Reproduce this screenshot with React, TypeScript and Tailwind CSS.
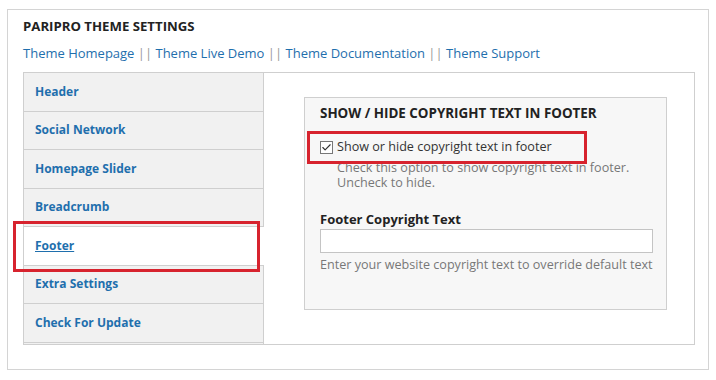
import { Check } from 'lucide-react';

const tabs = ['Header', 'Social Network', 'Homepage Slider', 'Breadcrumb', 'Footer', 'Extra Settings', 'Check For Update'];
const links = ['Theme Homepage', 'Theme Live Demo', 'Theme Documentation', 'Theme Support'];

export default function App() {
  return (
    <div className="min-h-[380px] w-[716px] bg-white pl-[7px] pt-[9px] font-['Open_Sans',sans-serif] text-[#333]">
      <div className="relative w-[702px] h-[361px] border border-[#d4d4d4] pl-[15px] pr-[13px]">
        <h2 className="mt-[8px] text-[13.2px] leading-[16px] font-bold text-[#222]">PARIPRO THEME SETTINGS</h2>
        <p className="mt-[10px] text-[13px] leading-[18px]">
          {links.map((l, i) => (
            <span key={l}>
              {i > 0 && <span className="text-[#999]"> || </span>}
              <a className="text-[#1f6fad]">{l}</a>
            </span>
          ))}
        </p>

        {/* settings panel */}
        <div className="mt-[10px] flex h-[273px] border border-[#cfcfcf]">
          <ul className="flex w-[240px] flex-col bg-[#f1f1f1]">
            {tabs.map((t) => {
              const active = t === 'Footer';
              return (
                <li
                  key={t}
                  className={
                    active
                      ? 'flex h-[38.5px] items-center border-b border-[#cfcfcf] bg-white pl-[11px] text-[12px] font-bold text-[#1f6fad] underline'
                      : 'flex h-[38.5px] items-center border-b border-r border-[#cfcfcf] pl-[11px] text-[12px] font-bold text-[#1f6fad]'
                  }
                >
                  {t}
                </li>
              );
            })}
            <li className="flex-1 border-r border-[#cfcfcf]" />
          </ul>

          <div className="flex-1 pl-[40px] pr-[27px] pt-[24px]">
            <div className="h-[213px] border border-[#cfcfcf] bg-[#f7f7f7] pl-[15px] pr-[13px] pt-[6px]">
              <h3 className="text-[13.4px] leading-[18px] font-bold text-[#222]">SHOW / HIDE COPYRIGHT TEXT IN FOOTER</h3>
              <label className="mt-[17px] flex items-center gap-[4px] text-[12.6px] leading-[16px] text-[#333]">
                <span className="flex h-[13px] w-[13px] items-center justify-center border border-[#777] bg-white">
                  <Check className="h-[11px] w-[11px] text-[#333]" strokeWidth={2.5} />
                </span>
                Show or hide copyright text in footer
              </label>
              <p className="mt-[5px] pl-[17px] text-[12.6px] leading-[15px] text-[#777]">
                Check this option to show copyright text in footer.
                <br />
                Uncheck to hide.
              </p>
              <h4 className="mt-[20px] text-[13px] leading-[18px] font-bold text-[#222]">Footer Copyright Text</h4>
              <input className="mt-[1px] block h-[24px] w-[333px] border border-[#c4c4c4] bg-white" />
              <p className="mt-[4px] text-[12.6px] leading-[16px] text-[#777]">Enter your website copyright text to override default text</p>
            </div>
          </div>
        </div>

        {/* red highlight boxes */}
        <div className="absolute left-[5px] top-[211px] h-[51px] w-[247px] border-[3px] border-[#d7232e]" />
        <div className="absolute left-[299px] top-[121px] h-[33px] w-[280px] border-[3px] border-[#d7232e]" />
      </div>
    </div>
  );
}
